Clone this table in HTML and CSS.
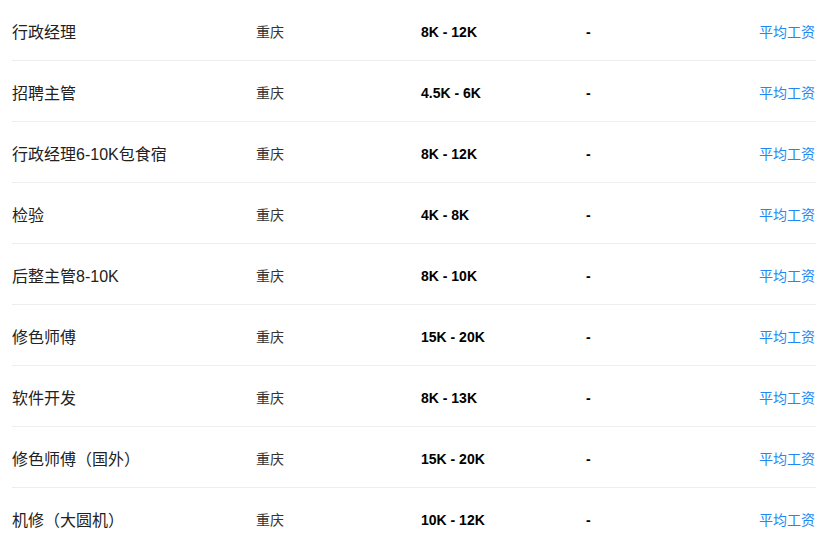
FILE: index.html
```html
<!DOCTYPE html>
<html lang="zh-CN">
<head>
<meta charset="utf-8">
<link rel="stylesheet" href="styles.css">
</head>
<body>
<ul class="job-list">
  <li class="job-row"><span class="job-title">行政经理</span><span class="job-city">重庆</span><span class="job-salary">8K - 12K</span><span class="job-extra">-</span><a class="job-link" href="#">平均工资</a></li>
  <li class="job-row"><span class="job-title">招聘主管</span><span class="job-city">重庆</span><span class="job-salary">4.5K - 6K</span><span class="job-extra">-</span><a class="job-link" href="#">平均工资</a></li>
  <li class="job-row"><span class="job-title">行政经理6-10K包食宿</span><span class="job-city">重庆</span><span class="job-salary">8K - 12K</span><span class="job-extra">-</span><a class="job-link" href="#">平均工资</a></li>
  <li class="job-row"><span class="job-title">检验</span><span class="job-city">重庆</span><span class="job-salary">4K - 8K</span><span class="job-extra">-</span><a class="job-link" href="#">平均工资</a></li>
  <li class="job-row"><span class="job-title">后整主管8-10K</span><span class="job-city">重庆</span><span class="job-salary">8K - 10K</span><span class="job-extra">-</span><a class="job-link" href="#">平均工资</a></li>
  <li class="job-row"><span class="job-title">修色师傅</span><span class="job-city">重庆</span><span class="job-salary">15K - 20K</span><span class="job-extra">-</span><a class="job-link" href="#">平均工资</a></li>
  <li class="job-row"><span class="job-title">软件开发</span><span class="job-city">重庆</span><span class="job-salary">8K - 13K</span><span class="job-extra">-</span><a class="job-link" href="#">平均工资</a></li>
  <li class="job-row"><span class="job-title">修色师傅（国外）</span><span class="job-city">重庆</span><span class="job-salary">15K - 20K</span><span class="job-extra">-</span><a class="job-link" href="#">平均工资</a></li>
  <li class="job-row"><span class="job-title">机修（大圆机）</span><span class="job-city">重庆</span><span class="job-salary">10K - 12K</span><span class="job-extra">-</span><a class="job-link" href="#">平均工资</a></li>
</ul>
</body>
</html>
```

FILE: styles.css
```css
html, body {
  margin: 0;
  padding: 0;
  background: #fff;
}
body {
  font-family: "Liberation Sans", "Noto Sans CJK SC", sans-serif;
  color: #222;
}
.job-list {
  list-style: none;
  margin: 0 0 0 12px;
  padding: 0;
  width: 804px;
}
.job-row {
  display: grid;
  grid-template-columns: 244px 165px 165px 1fr auto;
  align-items: center;
  box-sizing: border-box;
  height: 61px;
  padding-top: 4px;
  border-bottom: 1px solid #eeeeee;
}
.job-title {
  font-size: 16px;
  color: #222;
  margin-bottom: 2px;
}
.job-city {
  font-size: 14px;
  color: #333;
  margin-bottom: 2px;
}
.job-salary {
  font-size: 14px;
  font-weight: bold;
  color: #000;
}
.job-extra {
  font-size: 14px;
  font-weight: bold;
  color: #000;
}
.job-link {
  font-size: 14px;
  color: #1e88f5;
  text-decoration: none;
  margin-right: 1px;
  margin-bottom: 2px;
}
```
